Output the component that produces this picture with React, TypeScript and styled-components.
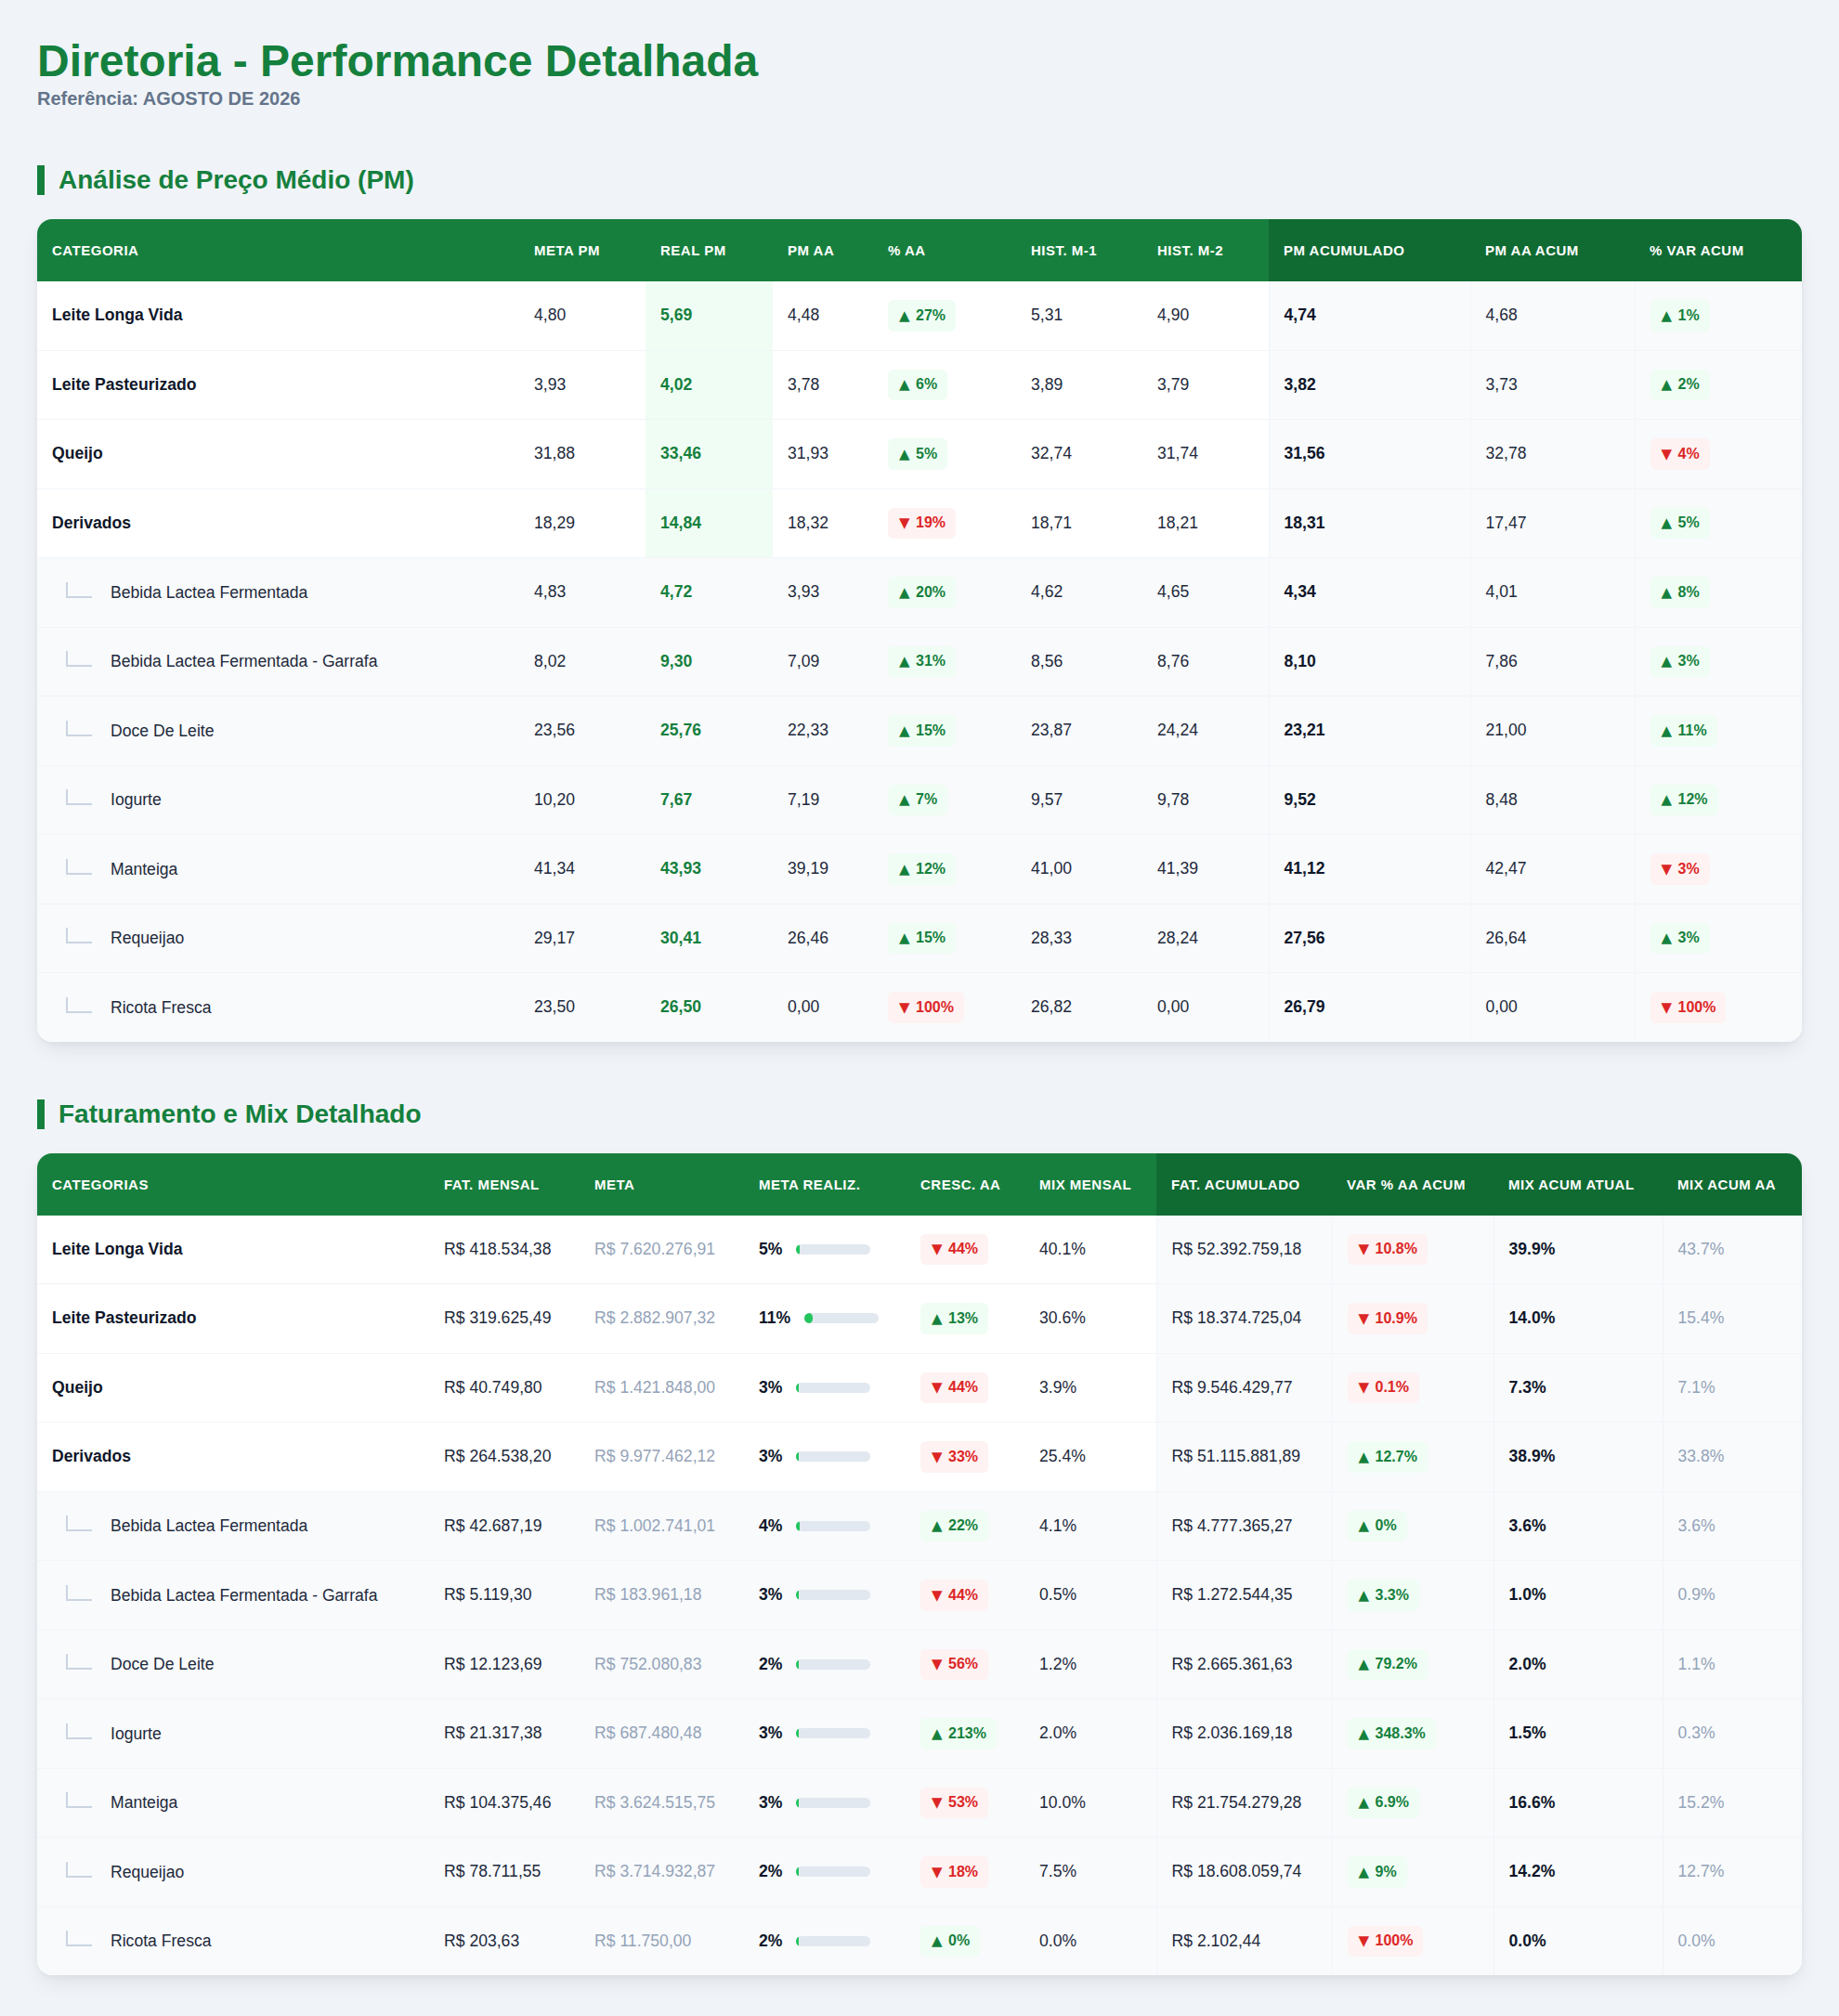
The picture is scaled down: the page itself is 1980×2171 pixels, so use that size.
import React from "react";
import styled, { createGlobalStyle } from "styled-components";

const GlobalStyle = createGlobalStyle`
  * { box-sizing: border-box; }
  body {
    margin: 0;
    background: #f0f4f8;
    font-family: "Liberation Sans", Arial, Helvetica, sans-serif;
    color: #1e293b;
  }
`;

const Page = styled.div`
  padding: 40px;
`;

const Header = styled.header`
  margin-bottom: 60px;
`;

const Title = styled.h1`
  margin: 2px 0 4px;
  font-size: 48px;
  line-height: 48px;
  font-weight: 700;
  color: #15803d;
`;

const Subtitle = styled.div`
  font-size: 20px;
  line-height: 24px;
  font-weight: 700;
  color: #64748b;
`;

const Section = styled.section`
  margin-bottom: 62px;
  &:last-child { margin-bottom: 0; }
`;

const SectionTitle = styled.h2`
  margin: 0 0 26px;
  padding-left: 15px;
  border-left: 8px solid #15803d;
  font-size: 28px;
  line-height: 32px;
  font-weight: 700;
  color: #15803d;
`;

const Card = styled.div`
  background: #ffffff;
  border-radius: 16px;
  overflow: hidden;
  box-shadow: 0 10px 24px -6px rgba(15, 23, 42, 0.10), 0 2px 6px rgba(15, 23, 42, 0.04);
`;

const Table = styled.table`
  width: 100%;
  table-layout: fixed;
  border-collapse: collapse;
`;

const HeadCell = styled.th<{ $acc?: boolean }>`
  padding: 25px 16px;
  line-height: 17px;
  text-align: left;
  font-size: 15px;
  font-weight: 700;
  letter-spacing: 0.5px;
  text-transform: uppercase;
  white-space: nowrap;
  color: #ffffff;
  background: ${(p) => (p.$acc ? "#106b33" : "#177f3e")};
`;

const Row = styled.tr<{ $sub?: boolean }>`
  background: ${(p) => (p.$sub ? "#f8fafc" : "#ffffff")};
  border-bottom: 1px solid #f1f5f9;
  &:last-child { border-bottom: none; }
`;

type Tone = "plain" | "bold" | "green" | "muted";

const toneColor: Record<Tone, string> = {
  plain: "#1e293b",
  bold: "#0f172a",
  green: "#15803d",
  muted: "#94a3b8",
};

const Cell = styled.td<{ $tone?: Tone; $acc?: boolean; $hl?: boolean }>`
  padding: 20px 16px;
  vertical-align: middle;
  font-size: 17.6px;
  white-space: nowrap;
  color: ${(p) => toneColor[p.$tone || "plain"]};
  font-weight: ${(p) => (p.$tone === "bold" || p.$tone === "green" ? 700 : 400)};
  background: ${(p) => (p.$acc ? "#f8fafc" : p.$hl ? "#f0fdf4" : "transparent")};
  border-left: ${(p) => (p.$acc ? "1px solid #f1f5f9" : "none")};
`;

const Connector = styled.span`
  display: inline-block;
  width: 28px;
  height: 17px;
  margin: 0 20px 0 15px;
  border-left: 2px solid #cbd5e1;
  border-bottom: 2px solid #cbd5e1;
  vertical-align: baseline;
`;

const Badge = styled.span<{ $up: boolean }>`
  display: inline-block;
  padding: 7.5px 11px 7.5px 12px;
  line-height: 18.5px;
  border-radius: 6px;
  font-size: 16px;
  font-weight: 700;
  white-space: nowrap;
  color: ${(p) => (p.$up ? "#15803d" : "#dc2626")};
  background: ${(p) => (p.$up ? "#f0fdf4" : "#fef2f2")};
`;

const Arrow = styled.span`
  font-family: "DejaVu Sans", sans-serif;
  font-size: 15px;
  font-weight: 400;
  margin-right: 2px;
`;

const MetaWrap = styled.div`
  display: flex;
  align-items: center;
  gap: 15px;
`;

const Pct = styled.span`
  font-weight: 700;
  color: #0f172a;
`;

const Track = styled.div`
  width: 80px;
  height: 11px;
  border-radius: 6px;
  background: #e2e8f0;
  overflow: hidden;
`;

const Fill = styled.div`
  height: 100%;
  border-radius: 6px;
  background: #22c55e;
`;

const Var = ({ v }: { v: string }) => {
  const up = !v.startsWith("-");
  const num = v.replace("-", "");
  return (
    <Badge $up={up}>
      <Arrow>{up ? "▲" : "▼"}</Arrow> {num}
    </Badge>
  );
};

const Name = ({ name, sub }: { name: string; sub: boolean }) =>
  sub ? (
    <Cell>
      <Connector />
      {name}
    </Cell>
  ) : (
    <Cell $tone="bold">{name}</Cell>
  );

type PmRow = [string, string, string, string, string, string, string, string, string, string];

const pmRows: PmRow[] = [
  ["Leite Longa Vida", "4,80", "5,69", "4,48", "27%", "5,31", "4,90", "4,74", "4,68", "1%"],
  ["Leite Pasteurizado", "3,93", "4,02", "3,78", "6%", "3,89", "3,79", "3,82", "3,73", "2%"],
  ["Queijo", "31,88", "33,46", "31,93", "5%", "32,74", "31,74", "31,56", "32,78", "-4%"],
  ["Derivados", "18,29", "14,84", "18,32", "-19%", "18,71", "18,21", "18,31", "17,47", "5%"],
  ["Bebida Lactea Fermentada", "4,83", "4,72", "3,93", "20%", "4,62", "4,65", "4,34", "4,01", "8%"],
  ["Bebida Lactea Fermentada - Garrafa", "8,02", "9,30", "7,09", "31%", "8,56", "8,76", "8,10", "7,86", "3%"],
  ["Doce De Leite", "23,56", "25,76", "22,33", "15%", "23,87", "24,24", "23,21", "21,00", "11%"],
  ["Iogurte", "10,20", "7,67", "7,19", "7%", "9,57", "9,78", "9,52", "8,48", "12%"],
  ["Manteiga", "41,34", "43,93", "39,19", "12%", "41,00", "41,39", "41,12", "42,47", "-3%"],
  ["Requeijao", "29,17", "30,41", "26,46", "15%", "28,33", "28,24", "27,56", "26,64", "3%"],
  ["Ricota Fresca", "23,50", "26,50", "0,00", "-100%", "26,82", "0,00", "26,79", "0,00", "-100%"],
];

type FatRow = [string, string, string, number, string, string, string, string, string, string];

const fatRows: FatRow[] = [
  ["Leite Longa Vida", "R$ 418.534,38", "R$ 7.620.276,91", 5, "-44%", "40.1%", "R$ 52.392.759,18", "-10.8%", "39.9%", "43.7%"],
  ["Leite Pasteurizado", "R$ 319.625,49", "R$ 2.882.907,32", 11, "13%", "30.6%", "R$ 18.374.725,04", "-10.9%", "14.0%", "15.4%"],
  ["Queijo", "R$ 40.749,80", "R$ 1.421.848,00", 3, "-44%", "3.9%", "R$ 9.546.429,77", "-0.1%", "7.3%", "7.1%"],
  ["Derivados", "R$ 264.538,20", "R$ 9.977.462,12", 3, "-33%", "25.4%", "R$ 51.115.881,89", "12.7%", "38.9%", "33.8%"],
  ["Bebida Lactea Fermentada", "R$ 42.687,19", "R$ 1.002.741,01", 4, "22%", "4.1%", "R$ 4.777.365,27", "0%", "3.6%", "3.6%"],
  ["Bebida Lactea Fermentada - Garrafa", "R$ 5.119,30", "R$ 183.961,18", 3, "-44%", "0.5%", "R$ 1.272.544,35", "3.3%", "1.0%", "0.9%"],
  ["Doce De Leite", "R$ 12.123,69", "R$ 752.080,83", 2, "-56%", "1.2%", "R$ 2.665.361,63", "79.2%", "2.0%", "1.1%"],
  ["Iogurte", "R$ 21.317,38", "R$ 687.480,48", 3, "213%", "2.0%", "R$ 2.036.169,18", "348.3%", "1.5%", "0.3%"],
  ["Manteiga", "R$ 104.375,46", "R$ 3.624.515,75", 3, "-53%", "10.0%", "R$ 21.754.279,28", "6.9%", "16.6%", "15.2%"],
  ["Requeijao", "R$ 78.711,55", "R$ 3.714.932,87", 2, "-18%", "7.5%", "R$ 18.608.059,74", "9%", "14.2%", "12.7%"],
  ["Ricota Fresca", "R$ 203,63", "R$ 11.750,00", 2, "0%", "0.0%", "R$ 2.102,44", "-100%", "0.0%", "0.0%"],
];

const pmCols = [519, 136, 137, 108, 154, 136, 136, 217, 177, 180];
const pmHeads = ["Categoria", "Meta PM", "Real PM", "PM AA", "% AA", "Hist. M-1", "Hist. M-2", "PM Acumulado", "PM AA Acum", "% Var Acum"];

const fatCols = [422, 162, 177, 174, 128, 142, 189, 174, 182, 150];
const fatHeads = ["Categorias", "Fat. Mensal", "Meta", "Meta Realiz.", "Cresc. AA", "Mix Mensal", "Fat. Acumulado", "Var % AA Acum", "Mix Acum Atual", "Mix Acum AA"];

const Cols = ({ widths }: { widths: number[] }) => (
  <colgroup>
    {widths.map((w, i) => (
      <col key={i} style={{ width: w }} />
    ))}
  </colgroup>
);

export default function App() {
  return (
    <>
      <GlobalStyle />
      <Page>
        <Header>
          <Title>Diretoria - Performance Detalhada</Title>
          <Subtitle>Referência: AGOSTO DE 2026</Subtitle>
        </Header>

        <Section>
          <SectionTitle>Análise de Preço Médio (PM)</SectionTitle>
          <Card>
            <Table>
              <Cols widths={pmCols} />
              <thead>
                <tr>
                  {pmHeads.map((h, i) => (
                    <HeadCell key={h} $acc={i >= 7}>
                      {h}
                    </HeadCell>
                  ))}
                </tr>
              </thead>
              <tbody>
                {pmRows.map((r, idx) => {
                  const sub = idx >= 4;
                  return (
                    <Row key={r[0]} $sub={sub}>
                      <Name name={r[0]} sub={sub} />
                      <Cell>{r[1]}</Cell>
                      <Cell $tone="green" $hl={!sub}>{r[2]}</Cell>
                      <Cell>{r[3]}</Cell>
                      <Cell><Var v={r[4]} /></Cell>
                      <Cell>{r[5]}</Cell>
                      <Cell>{r[6]}</Cell>
                      <Cell $acc $tone="bold">{r[7]}</Cell>
                      <Cell $acc>{r[8]}</Cell>
                      <Cell $acc><Var v={r[9]} /></Cell>
                    </Row>
                  );
                })}
              </tbody>
            </Table>
          </Card>
        </Section>

        <Section>
          <SectionTitle>Faturamento e Mix Detalhado</SectionTitle>
          <Card>
            <Table>
              <Cols widths={fatCols} />
              <thead>
                <tr>
                  {fatHeads.map((h, i) => (
                    <HeadCell key={h} $acc={i >= 6}>
                      {h}
                    </HeadCell>
                  ))}
                </tr>
              </thead>
              <tbody>
                {fatRows.map((r, idx) => {
                  const sub = idx >= 4;
                  return (
                    <Row key={r[0]} $sub={sub}>
                      <Name name={r[0]} sub={sub} />
                      <Cell>{r[1]}</Cell>
                      <Cell $tone="muted">{r[2]}</Cell>
                      <Cell>
                        <MetaWrap>
                          <Pct>{r[3]}%</Pct>
                          <Track>
                            <Fill style={{ width: `${Math.max(r[3], 3)}%` }} />
                          </Track>
                        </MetaWrap>
                      </Cell>
                      <Cell><Var v={r[4]} /></Cell>
                      <Cell>{r[5]}</Cell>
                      <Cell $acc>{r[6]}</Cell>
                      <Cell $acc><Var v={r[7]} /></Cell>
                      <Cell $acc $tone="bold">{r[8]}</Cell>
                      <Cell $acc $tone="muted">{r[9]}</Cell>
                    </Row>
                  );
                })}
              </tbody>
            </Table>
          </Card>
        </Section>
      </Page>
    </>
  );
}
